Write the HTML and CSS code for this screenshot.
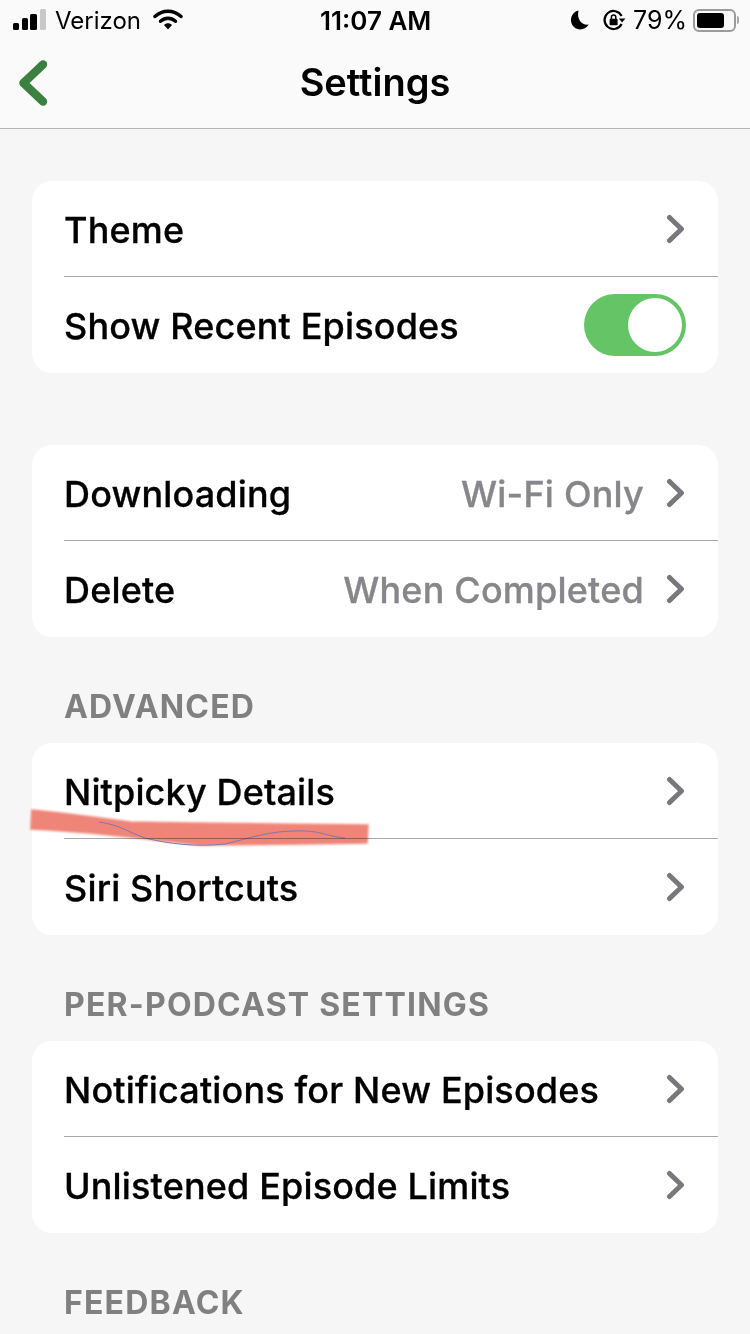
FILE: index.html
```html
<!DOCTYPE html>
<html>
<head lang="en">
    <meta charset="UTF-8">
    <title>Settings</title>
    <link rel="stylesheet" href="styles.css">
</head>
<body>
<div class="page">
    <div class="top">
        <div class="status">
            <div class="status-left">
                <svg class="signal" width="33" height="22" viewBox="0 0 33 22">
                    <rect x="0" y="14" width="6" height="7" rx="1.500" fill="#000"/>
                    <rect x="9" y="9" width="6" height="12" rx="1.500" fill="#000"/>
                    <rect x="17" y="5" width="7" height="16" rx="1.500" fill="#000"/>
                    <rect x="27" y="0" width="6" height="21" rx="1.500" fill="#c8c8c8"/>
                </svg>
                <span class="carrier">Verizon</span>
                <svg class="wifi" width="30" height="22" viewBox="0 0 30 22">
                    <path d="M2 7.500 C9.500 0.500 20.500 0.500 28 7.500" fill="none" stroke="#000" stroke-width="3.400" stroke-linecap="round"/>
                    <path d="M7.500 12.300 C12 8.300 18 8.300 22.500 12.300" fill="none" stroke="#000" stroke-width="3.400" stroke-linecap="round"/>
                    <path d="M11 16 C13.500 13.600 16.500 13.600 19 16 L15 20.600 Z" fill="#000"/>
                </svg>
            </div>
            <span class="clock">11:07 AM</span>
            <div class="status-right">
                <svg width="20" height="22" viewBox="0 0 20 22">
                    <path d="M8.500 1.500 C3.800 2.700 1 6.600 1 11 C1 16.600 5.400 20.500 10.400 20.500 C14 20.500 17 18.600 18.700 15.600 C12.500 16.600 6.400 11 8.500 1.500 Z" fill="#000"/>
                </svg>
                <svg class="lock" width="24" height="22" viewBox="0 0 24 22">
                    <path d="M19.600 7 A9 9 0 1 0 19.600 15" fill="none" stroke="#000" stroke-width="2.200"/>
                    <path d="M16.800 9.400 L23.400 9.400 L20.100 13.600 Z" fill="#000"/>
                    <rect x="7.600" y="9.800" width="8" height="6.400" rx="1" fill="#000"/>
                    <path d="M9.400 10 V8.200 A2.200 2.200 0 0 1 13.800 8.200 V10" fill="none" stroke="#000" stroke-width="1.500"/>
                </svg>
                <span class="percent">79%</span>
                <div class="battery">
                    <div class="battery-body"><div class="battery-fill"></div></div>
                    <div class="battery-cap"></div>
                </div>
            </div>
        </div>
        <div class="navbar">
            <svg class="back" width="30" height="46" viewBox="0 0 30 46">
                <path d="M25 4.500 L5.500 23 L25 41.500" fill="none" stroke="#3b7f41" stroke-width="8.500" stroke-linecap="round" stroke-linejoin="round"/>
            </svg>
            <span class="title">Settings</span>
        </div>
    </div>

    <div class="content">
        <div class="card first">
            <div class="row">
                <span class="name">Theme</span>
                <svg class="arrow" width="20" height="30" viewBox="0 0 20 30"><path d="M3.500 3.500 L15.500 15 L3.500 26.500" fill="none" stroke="#77777c" stroke-width="5" stroke-linecap="round" stroke-linejoin="round"/></svg>
            </div>
            <div class="row">
                <span class="name">Show Recent Episodes</span>
                <div class="switch"><div class="knob"></div></div>
            </div>
        </div>

        <div class="card second">
            <div class="row">
                <span class="name">Downloading</span>
                <span class="value">Wi-Fi Only</span>
                <svg class="arrow" width="20" height="30" viewBox="0 0 20 30"><path d="M3.500 3.500 L15.500 15 L3.500 26.500" fill="none" stroke="#77777c" stroke-width="5" stroke-linecap="round" stroke-linejoin="round"/></svg>
            </div>
            <div class="row">
                <span class="name">Delete</span>
                <span class="value">When Completed</span>
                <svg class="arrow" width="20" height="30" viewBox="0 0 20 30"><path d="M3.500 3.500 L15.500 15 L3.500 26.500" fill="none" stroke="#77777c" stroke-width="5" stroke-linecap="round" stroke-linejoin="round"/></svg>
            </div>
        </div>

        <div class="label">ADVANCED</div>
        <div class="card">
            <div class="row">
                <span class="name">Nitpicky Details</span>
                <svg class="arrow" width="20" height="30" viewBox="0 0 20 30"><path d="M3.500 3.500 L15.500 15 L3.500 26.500" fill="none" stroke="#77777c" stroke-width="5" stroke-linecap="round" stroke-linejoin="round"/></svg>
            </div>
            <div class="row">
                <span class="name">Siri Shortcuts</span>
                <svg class="arrow" width="20" height="30" viewBox="0 0 20 30"><path d="M3.500 3.500 L15.500 15 L3.500 26.500" fill="none" stroke="#77777c" stroke-width="5" stroke-linecap="round" stroke-linejoin="round"/></svg>
            </div>
        </div>

        <div class="label">PER-PODCAST SETTINGS</div>
        <div class="card">
            <div class="row">
                <span class="name">Notifications for New Episodes</span>
                <svg class="arrow" width="20" height="30" viewBox="0 0 20 30"><path d="M3.500 3.500 L15.500 15 L3.500 26.500" fill="none" stroke="#77777c" stroke-width="5" stroke-linecap="round" stroke-linejoin="round"/></svg>
            </div>
            <div class="row">
                <span class="name">Unlistened Episode Limits</span>
                <svg class="arrow" width="20" height="30" viewBox="0 0 20 30"><path d="M3.500 3.500 L15.500 15 L3.500 26.500" fill="none" stroke="#77777c" stroke-width="5" stroke-linecap="round" stroke-linejoin="round"/></svg>
            </div>
        </div>

        <div class="label">FEEDBACK</div>
    </div>

    <!-- marker scribble drawn over the screenshot -->
    <svg class="scribble" width="400" height="60" viewBox="0 0 400 60">
        <path class="marker" d="M32 10 L60 13 L100 18 L130 22 L190 23 L368 25 L367 43 L300 44 L200 45 L130 37 L90 33 L50 30 L31 29 Z"/>
        <path d="M99 22 C120 25 128 32 145 38 C170 44 195 47 225 44 C250 38 270 31 295 31 C320 30 325 36 345 38" fill="none" stroke="#7d78a8" stroke-width="1"/>
    </svg>
</div>
</body>
</html>
```

FILE: styles.css
```css
*{
    margin: 0;
    padding: 0;
    box-sizing: border-box;
}
html,body{
    height: 100%;
    overflow: hidden;
}
body{
    background: #f6f6f6;
    font-family: Inter, "Liberation Sans", sans-serif;
    color: #000;
}
.page{
    position: relative;
    height: 1334px;
    width: 750px;
    overflow: hidden;
}
.top{
    height: 129px;
    background: #fafafa;
    border-bottom: 1px solid #b4b4b6;
}
.status{
    height: 40px;
    padding: 0 11px 0 13px;
    display: flex;
    justify-content: space-between;
    align-items: center;
    position: relative;
}
.status-left,.status-right{
    display: flex;
    align-items: center;
}
.carrier{
    font-size: 24px;
    margin-left: 9px;
}
.wifi{
    margin-left: 12px;
}
.clock{
    font-size: 26px;
    font-weight: 600;
    position: absolute;
    left: 320px;
}
.lock{
    margin-left: 12px;
}
.percent{
    font-size: 25px;
    margin-left: 7px;
}
.battery{
    display: flex;
    align-items: center;
    margin-left: 6px;
}
.battery-body{
    width: 43px;
    height: 23px;
    border: 2px solid #9b9b9b;
    border-radius: 6px;
    padding: 2px;
}
.battery-fill{
    width: 27px;
    height: 15px;
    background: #000;
    border-radius: 3px;
}
.battery-cap{
    width: 2px;
    height: 8px;
    background: #a8a8a8;
    margin-left: 1px;
    border-radius: 0 2px 2px 0;
}
.navbar{
    height: 84px;
    display: flex;
    align-items: center;
    justify-content: center;
    position: relative;
}
.back{
    position: absolute;
    left: 18px;
    top: 20px;
}
.title{
    font-size: 38px;
    font-weight: 600;
}
.content{
    padding: 0 32px;
}
.card{
    background: #fff;
    border-radius: 20px;
    overflow: hidden;
}
.card.first{
    margin-top: 52px;
}
.card.second{
    margin-top: 72px;
}
.row{
    height: 96px;
    margin-left: 32px;
    padding-right: 32px;
    display: flex;
    align-items: center;
}
.row + .row{
    height: 97px;
    margin-top: -1px;
    border-top: 1px solid #a8a8aa;
}
.name{
    font-size: 36px;
    font-weight: 500;
    letter-spacing: .15px;
    -webkit-text-stroke: .3px #000;
    padding-top: 1px;
    flex: 1;
}
.value{
    font-size: 36px;
    font-weight: 500;
    letter-spacing: .2px;
    -webkit-text-stroke: .3px #87878b;
    padding-top: 1px;
    color: #87878b;
    margin-right: 22px;
}
.arrow{
    display: block;
}
.switch{
    width: 102px;
    height: 62px;
    border-radius: 31px;
    background: #65c466;
    padding: 4px;
    display: flex;
    justify-content: flex-end;
}
.knob{
    width: 54px;
    height: 54px;
    border-radius: 50%;
    background: #fff;
}
.label{
    font-size: 32px;
    font-weight: 700;
    letter-spacing: 1.2px;
    color: #808080;
    padding-left: 32px;
    height: 106px;
    padding-top: 53px;
    line-height: 34px;
}
.scribble{
    position: absolute;
    left: 0;
    top: 800px;
    mix-blend-mode: multiply;
}
.marker{
    fill: #ef8579;
    stroke: #ef8579;
    stroke-width: 1.500;
    stroke-linejoin: round;
    filter: blur(.8px);
}
```
